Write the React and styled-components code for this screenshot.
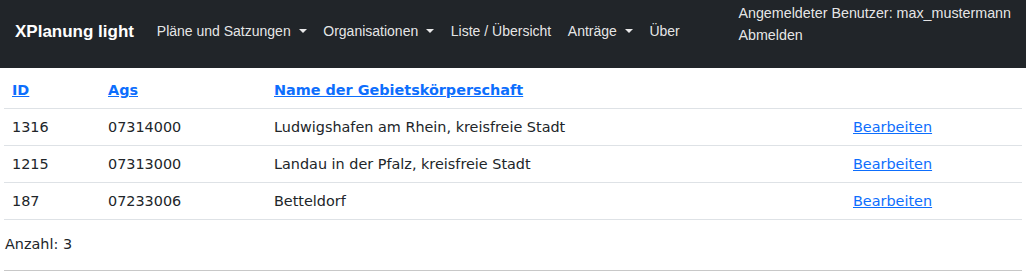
import React from 'react';
import styled, { createGlobalStyle } from 'styled-components';

const GlobalStyle = createGlobalStyle`
  *, *::before, *::after {
    box-sizing: border-box;
  }
  body {
    margin: 0;
    background: #fff;
    font-family: "DejaVu Sans", sans-serif;
    color: #212529;
  }
`;

const rows = [
  { id: 1316, ags: '07314000', name: 'Ludwigshafen am Rhein, kreisfreie Stadt' },
  { id: 1215, ags: '07313000', name: 'Landau in der Pfalz, kreisfreie Stadt' },
  { id: 187, ags: '07233006', name: 'Betteldorf' },
];

const navItems = [
  { label: 'Pläne und Satzungen', dropdown: true },
  { label: 'Organisationen', dropdown: true },
  { label: 'Liste / Übersicht' },
  { label: 'Anträge', dropdown: true },
  { label: 'Über' },
];

function App() {
  return (
    <>
      <GlobalStyle />
      <Navbar>
        <Brand>XPlanung light</Brand>
        <NavList>
          {navItems.map((item) => (
            <NavItem key={item.label}>
              {item.label}
              {item.dropdown && <Caret />}
            </NavItem>
          ))}
        </NavList>
        <UserBox>
          <span>Angemeldeter Benutzer: max_mustermann</span>
          <span>Abmelden</span>
        </UserBox>
      </Navbar>
      <Main>
        <Table>
          <colgroup>
            <col style={{ width: 96 }} />
            <col style={{ width: 166 }} />
            <col style={{ width: 579 }} />
            <col />
          </colgroup>
          <thead>
            <tr>
              <Th><HeadLink>ID</HeadLink></Th>
              <Th><HeadLink>Ags</HeadLink></Th>
              <Th><HeadLink>Name der Gebietskörperschaft</HeadLink></Th>
              <Th />
            </tr>
          </thead>
          <tbody>
            {rows.map((r) => (
              <tr key={r.id}>
                <Td>{r.id}</Td>
                <Td>{r.ags}</Td>
                <Td>{r.name}</Td>
                <Td><EditLink>Bearbeiten</EditLink></Td>
              </tr>
            ))}
          </tbody>
        </Table>
        <Count>Anzahl: 3</Count>
        <Rule />
      </Main>
    </>
  );
}

const Navbar = styled.nav`
  display: flex;
  align-items: flex-start;
  height: 68px;
  background: #212529;
  font-family: "Liberation Sans", Arial, sans-serif;
  color: rgba(255, 255, 255, 0.9);
`;

const Brand = styled.div`
  margin: 21px 0 0 15px;
  font-size: 17px;
  font-weight: bold;
  color: #fff;
  line-height: 22px;
`;

const NavList = styled.ul`
  display: flex;
  list-style: none;
  margin: 20px 0 0 14.5px;
  padding: 0;
`;

const NavItem = styled.li`
  display: flex;
  align-items: center;
  padding: 0 8.3px;
  font-size: 14px;
  line-height: 22px;
`;

const Caret = styled.span`
  margin-left: 8px;
  width: 0;
  height: 0;
  border-top: 4px solid rgba(255, 255, 255, 0.9);
  border-left: 4px solid transparent;
  border-right: 4px solid transparent;
`;

const UserBox = styled.div`
  display: flex;
  flex-direction: column;
  margin: 2px 15px 0 auto;
  font-size: 14.3px;
  line-height: 22px;
`;

const Main = styled.main`
  padding: 4px;
`;

const Table = styled.table`
  width: 100%;
  table-layout: fixed;
  border-collapse: collapse;
  font-size: 14.4px;
  line-height: 20px;
`;

const Th = styled.th`
  padding: 8px;
  text-align: left;
  border-bottom: 1px solid #dee2e6;
`;

const HeadLink = styled.a`
  color: #0d6efd;
  text-decoration: underline;
  font-weight: bold;
  cursor: pointer;
`;

const Td = styled.td`
  padding: 8px;
  border-bottom: 1px solid #dee2e6;
`;

const EditLink = styled.a`
  color: #0d6efd;
  text-decoration: underline;
  cursor: pointer;
`;

const Count = styled.p`
  margin: 14px 0 0 1px;
  font-size: 14.4px;
  line-height: 20px;
`;

const Rule = styled.hr`
  margin: 16px 0 0;
  border: 0;
  border-top: 1px solid #c8c8c8;
`;

export default App;
